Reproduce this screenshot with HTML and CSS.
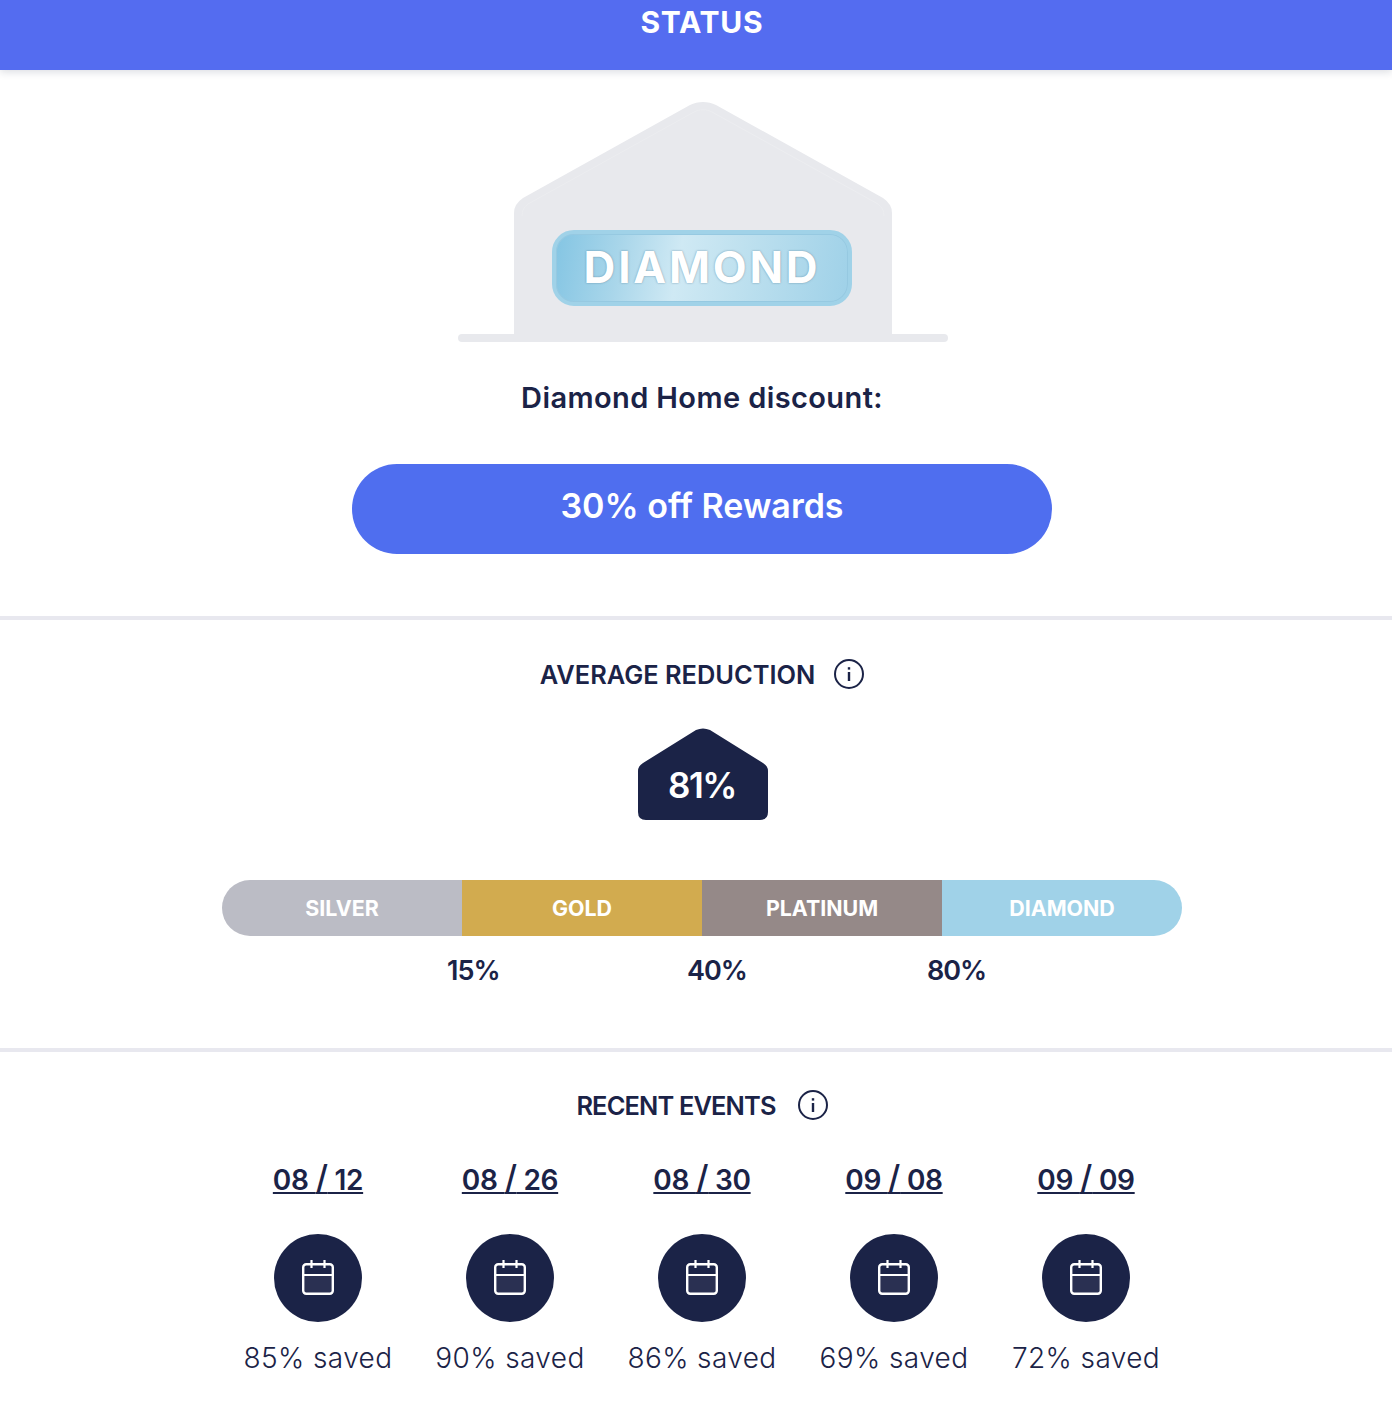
FILE: index.html
```html
<!DOCTYPE html>
<html lang="en">
<head>
  <meta charset="UTF-8" />
  <meta name="viewport" content="width=device-width, initial-scale=1.0"/>
  <title>Status</title>
  <link rel="stylesheet" href="styles.css">
</head>
<body>
  <header class="topbar">STATUS</header>

  <section class="section status">
    <div class="home">
      <svg class="home-shape" width="492" height="242" viewBox="0 0 492 242">
        <rect x="2" y="234" width="490" height="8" rx="4" fill="#e8e9ed"/>
        <path d="M58 242V113Q58 104 67 98L234 5C242 1 252 1 260 5L427 98Q436 104 436 113V242Z" fill="#e8e9ed"/>
        <path d="M66 116Q66 108 72 104L238 12C243 9 251 9 256 12L422 104Q428 108 428 116" fill="none" stroke="#ecedf0" stroke-width="1"/>
      </svg>
      <div class="badge"><span class="badge-text">DIAMOND</span></div>
    </div>
    <p class="discount-label">Diamond Home discount:</p>
    <div class="discount-pill">30% off Rewards</div>
  </section>

  <section class="section reduction">
    <h2 class="section-title">
      <span class="title-reduction">AVERAGE REDUCTION</span>
      <svg class="info" width="30" height="30" viewBox="0 0 30 30">
        <circle cx="15" cy="15" r="14" fill="none" stroke="#1b2347" stroke-width="2"/>
        <rect x="13.800" y="13" width="2.400" height="9" fill="#1b2347"/>
        <rect x="13.800" y="8.200" width="2.400" height="2.400" fill="#1b2347"/>
      </svg>
    </h2>
    <div class="avg-house">
      <svg width="130" height="92" viewBox="0 0 130 92">
        <path d="M0 84V43Q0 38 5 35L58 2Q65 -1 72 2L125 35Q130 38 130 43V84Q130 92 122 92H8Q0 92 0 84Z" fill="#1b2347"/>
      </svg>
      <span class="avg-value">81%</span>
    </div>
    <div class="tiers">
      <div class="tier silver">SILVER</div>
      <div class="tier gold">GOLD</div>
      <div class="tier platinum">PLATINUM</div>
      <div class="tier diamond">DIAMOND</div>
    </div>
    <div class="thresholds">
      <span class="threshold">15%</span>
      <span class="threshold">40%</span>
      <span class="threshold">80%</span>
    </div>
  </section>

  <section class="section events">
    <h2 class="section-title">
      <span class="title-events">RECENT EVENTS</span>
      <svg class="info" width="30" height="30" viewBox="0 0 30 30">
        <circle cx="15" cy="15" r="14" fill="none" stroke="#1b2347" stroke-width="2"/>
        <rect x="13.800" y="13" width="2.400" height="9" fill="#1b2347"/>
        <rect x="13.800" y="8.200" width="2.400" height="2.400" fill="#1b2347"/>
      </svg>
    </h2>
    <div class="event-list">
      <div class="event">
        <a class="event-date">08 <span class="slash">/</span> 12</a>
        <div class="event-icon">
          <svg width="36" height="40" viewBox="0 0 36 40">
            <rect x="3" y="17" width="30" height="19" fill="#2a3052"/>
            <rect x="3.200" y="6.200" width="29.600" height="29.600" rx="3" fill="none" stroke="#fff" stroke-width="2.400"/>
            <path d="M3 17H33M11.500 2V10M24.500 2V10" fill="none" stroke="#fff" stroke-width="2.200"/>
          </svg>
        </div>
        <div class="event-saved">85% saved</div>
      </div>
      <div class="event">
        <a class="event-date">08 <span class="slash">/</span> 26</a>
        <div class="event-icon">
          <svg width="36" height="40" viewBox="0 0 36 40">
            <rect x="3" y="17" width="30" height="19" fill="#2a3052"/>
            <rect x="3.200" y="6.200" width="29.600" height="29.600" rx="3" fill="none" stroke="#fff" stroke-width="2.400"/>
            <path d="M3 17H33M11.500 2V10M24.500 2V10" fill="none" stroke="#fff" stroke-width="2.200"/>
          </svg>
        </div>
        <div class="event-saved">90% saved</div>
      </div>
      <div class="event">
        <a class="event-date">08 <span class="slash">/</span> 30</a>
        <div class="event-icon">
          <svg width="36" height="40" viewBox="0 0 36 40">
            <rect x="3" y="17" width="30" height="19" fill="#2a3052"/>
            <rect x="3.200" y="6.200" width="29.600" height="29.600" rx="3" fill="none" stroke="#fff" stroke-width="2.400"/>
            <path d="M3 17H33M11.500 2V10M24.500 2V10" fill="none" stroke="#fff" stroke-width="2.200"/>
          </svg>
        </div>
        <div class="event-saved">86% saved</div>
      </div>
      <div class="event">
        <a class="event-date">09 <span class="slash">/</span> 08</a>
        <div class="event-icon">
          <svg width="36" height="40" viewBox="0 0 36 40">
            <rect x="3" y="17" width="30" height="19" fill="#2a3052"/>
            <rect x="3.200" y="6.200" width="29.600" height="29.600" rx="3" fill="none" stroke="#fff" stroke-width="2.400"/>
            <path d="M3 17H33M11.500 2V10M24.500 2V10" fill="none" stroke="#fff" stroke-width="2.200"/>
          </svg>
        </div>
        <div class="event-saved">69% saved</div>
      </div>
      <div class="event">
        <a class="event-date">09 <span class="slash">/</span> 09</a>
        <div class="event-icon">
          <svg width="36" height="40" viewBox="0 0 36 40">
            <rect x="3" y="17" width="30" height="19" fill="#2a3052"/>
            <rect x="3.200" y="6.200" width="29.600" height="29.600" rx="3" fill="none" stroke="#fff" stroke-width="2.400"/>
            <path d="M3 17H33M11.500 2V10M24.500 2V10" fill="none" stroke="#fff" stroke-width="2.200"/>
          </svg>
        </div>
        <div class="event-saved">72% saved</div>
      </div>
    </div>
  </section>
</body>
</html>
```

FILE: styles.css
```css
* {
  box-sizing: border-box;
}
html, body {
  overflow: hidden;
}
body {
  margin: 0;
  font-family: Inter, 'Noto Sans', sans-serif;
  background: #fff;
  color: #1b2347;
}
.topbar {
  height: 70px;
  line-height: 44px;
  padding-left: 12px;
  text-align: center;
  background: #546cf0;
  color: #fff;
  font-size: 30px;
  font-weight: 700;
  letter-spacing: 0.8px;
  box-shadow: 0 2px 8px rgba(27, 35, 71, 0.16);
}
.section {
  padding-left: 12px;
  border-bottom: 4px solid #e8e8ef;
}
.status {
  height: 550px;
  padding-top: 30px;
}
.reduction {
  height: 432px;
  padding-top: 34px;
}
.events {
  padding-top: 33px;
  border-bottom: none;
}
.home {
  position: relative;
  width: 492px;
  height: 242px;
  margin: 0 auto;
}
.home-shape {
  display: block;
}
.badge {
  position: absolute;
  top: 130px;
  left: 96px;
  width: 300px;
  height: 76px;
  padding-bottom: 2px;
  display: flex;
  align-items: center;
  justify-content: center;
  border: 4px solid #a0d2e8;
  border-radius: 22px;
  background: linear-gradient(100deg, #84c5e3 0%, #a9d6ea 22%, #cfe9f4 42%, #bfe1ef 62%, #9fd1e8 100%);
  box-shadow: inset 0 0 0 1px #96c9e1;
}
.badge-text {
  color: #fff;
  font-size: 44px;
  font-weight: 700;
  letter-spacing: 2.8px;
  text-shadow: 0 0 2px rgba(70, 110, 135, 0.7);
}
.discount-label {
  margin: 35px 0 0;
  line-height: 42px;
  text-align: center;
  font-size: 29px;
  font-weight: 600;
  letter-spacing: 0.4px;
}
.discount-pill {
  width: 700px;
  height: 90px;
  margin: 45px auto 0;
  padding-bottom: 7px;
  display: flex;
  align-items: center;
  justify-content: center;
  border-radius: 45px;
  background: #4f6eef;
  color: #fff;
  font-size: 34px;
  font-weight: 600;
}
.section-title {
  display: flex;
  align-items: center;
  justify-content: center;
  height: 40px;
  margin: 0;
  font-size: 25.4px;
  font-weight: 600;
}
.title-reduction {
  margin-right: 19px;
}
.title-events {
  margin-right: 22px;
  letter-spacing: -0.85px;
}
.avg-house {
  position: relative;
  width: 132px;
  height: 92px;
  margin: 34px auto 0;
  padding-left: 2px;
}
.avg-house svg {
  display: block;
}
.avg-value {
  position: absolute;
  top: 35px;
  left: 0;
  width: 100%;
  text-align: center;
  color: #fff;
  font-size: 35px;
  letter-spacing: -1.5px;
  line-height: 44px;
  font-weight: 600;
}
.tiers {
  display: flex;
  width: 960px;
  height: 56px;
  margin: 60px auto 0;
  border-radius: 28px;
  overflow: hidden;
}
.tier {
  width: 240px;
  line-height: 56px;
  text-align: center;
  color: #fff;
  font-size: 21.4px;
  font-weight: 700;
}
.silver { background: #bbbcc5; }
.gold { background: #d2ab4f; }
.platinum { background: #958988; }
.diamond { background: #a0d2e8; }
.thresholds {
  display: flex;
  width: 960px;
  margin: 17px auto 0;
  padding-left: 225px;
}
.threshold {
  width: 240px;
  line-height: 36px;
  font-size: 27px;
  font-weight: 600;
  letter-spacing: -1px;
}
.event-list {
  display: grid;
  grid-template-columns: repeat(5, 192px);
  width: 960px;
  margin: 35px auto 0;
}
.event {
  text-align: center;
}
.event-date {
  display: block;
  line-height: 40px;
  font-size: 28px;
  font-weight: 600;
  letter-spacing: -0.3px;
  text-decoration: underline;
}
.slash {
  font-size: 34px;
  font-weight: 500;
  line-height: 20px;
}
.event-icon {
  width: 88px;
  height: 88px;
  margin: 34px auto 0;
  display: flex;
  align-items: center;
  justify-content: center;
  border-radius: 50%;
  background: #1b2347;
}
.event-saved {
  margin-top: 16px;
  line-height: 40px;
  font-size: 28px;
  font-weight: 350;
  letter-spacing: 0.4px;
}
```
